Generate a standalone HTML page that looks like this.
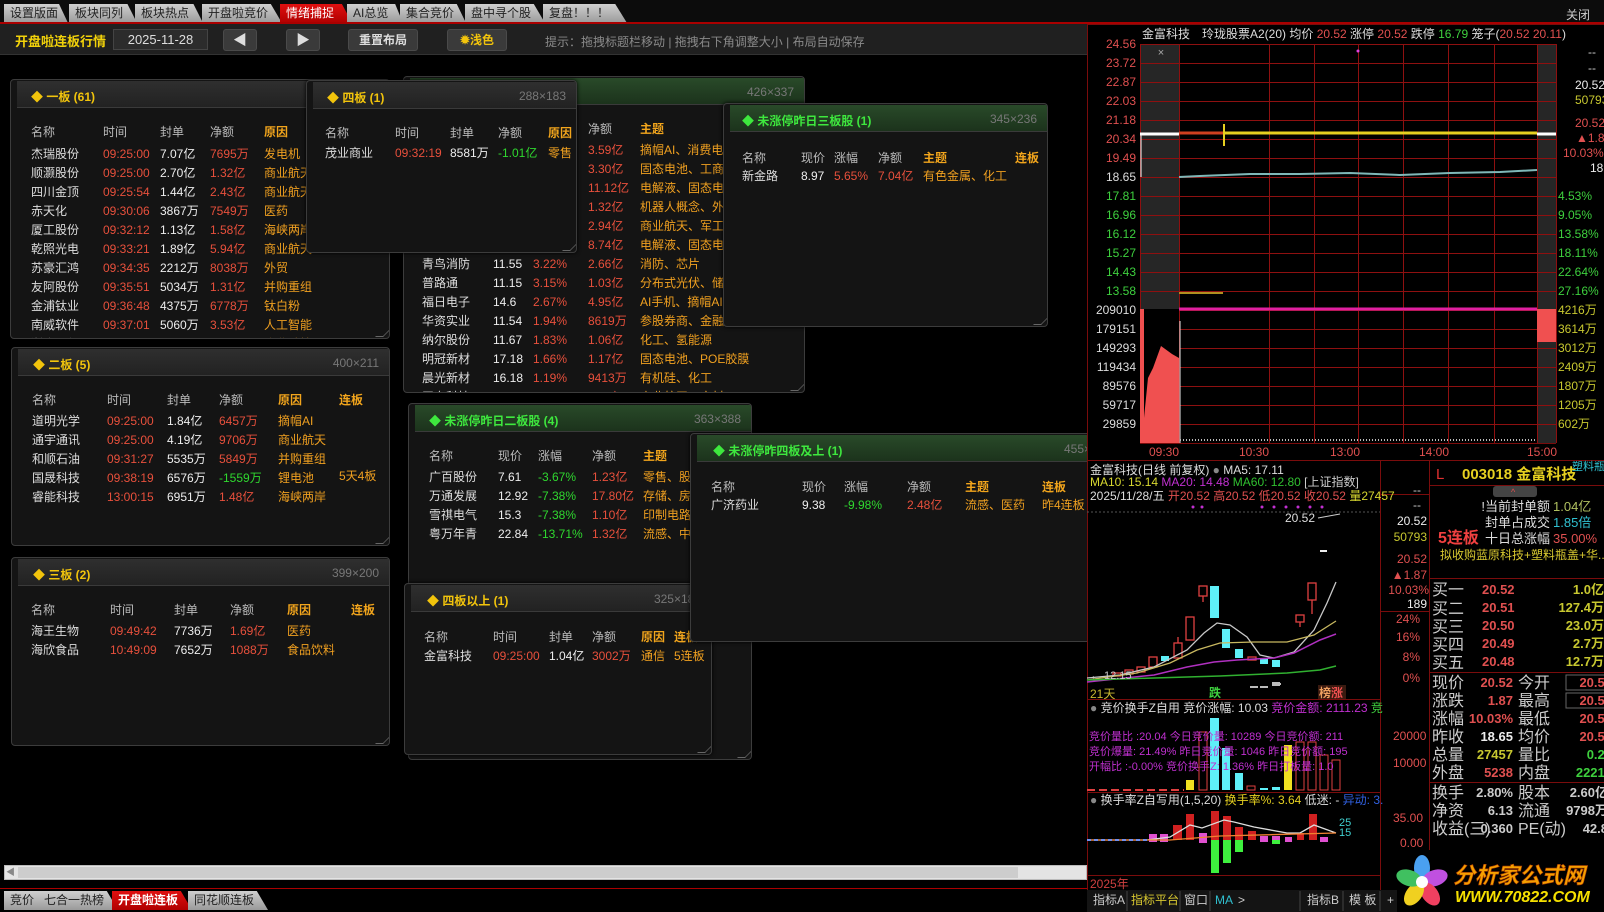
<!DOCTYPE html>
<html><head><meta charset="utf-8">
<style>
*{margin:0;padding:0;box-sizing:border-box}
body{width:1604px;height:912px;background:#000;overflow:hidden;position:relative;font-family:"Liberation Sans","Noto Sans CJK SC",sans-serif;font-size:12px;color:#ddd}
.a{position:absolute;white-space:nowrap}
.tab{position:absolute;top:4px;height:19px;background:linear-gradient(#cfcfcf,#9a9a9a);color:#222;font-size:12px;line-height:19px;padding-left:6px;clip-path:polygon(0 0,86% 0,100% 100%,0 100%)}
.tab.on{background:linear-gradient(#e01010,#b00000);color:#fff}
.btn{position:absolute;top:29px;height:22px;background:#3a3a3a;border:1px solid #4a4a4a;border-radius:3px;color:#ddd;text-align:center;line-height:20px;font-weight:bold}
.p{position:absolute;background:#141414;border:1px solid #3c3c3c;border-radius:4px;overflow:hidden;box-shadow:0 0 4px #000}
.h{position:absolute;left:6px;right:0;top:1px;height:27px;background:linear-gradient(#2f2f2f,#222);border-bottom:1px solid #3a3a3a}
.h.g{background:linear-gradient(#294a29,#1c331c)}
.tt{position:absolute;top:7px;font-weight:bold;color:#f2c40c;font-size:12px}
.h.g .tt{color:#3ee83e}
.sz{position:absolute;top:7px;right:10px;color:#777;font-size:12px}
.p .a{line-height:14px}
.hd{color:#bbb}.o{color:#f2a51c;font-weight:bold}.r{color:#e8503c}.w{color:#eee}.gr{color:#2fd82f}.y{color:#f0a020}
.rs{position:absolute;right:2px;bottom:1px;width:8px;height:8px;border-right:1px solid #666;border-bottom:1px solid #666;transform:skew(-45deg)}
</style></head><body>

<!-- top tabs -->
<div class="a" style="left:0;top:0;width:1604px;height:24px;background:#0c0c0c"></div>
<div class="tab" style="left:4px;width:64px">设置版面</div>
<div class="tab" style="left:69px;width:68px">板块同列</div>
<div class="tab" style="left:135px;width:68px">板块热点</div>
<div class="tab" style="left:202px;width:80px">开盘啦竞价</div>
<div class="tab on" style="left:280px;width:72px">情绪捕捉</div>
<div class="tab" style="left:347px;width:56px">AI总览</div>
<div class="tab" style="left:400px;width:66px">集合竞价</div>
<div class="tab" style="left:465px;width:80px">盘中寻个股</div>
<div class="tab" style="left:543px;width:84px">复盘！！！</div>
<div class="a" style="left:0;top:22px;width:1604px;height:2px;background:#a00"></div>
<div class="a" style="left:1566px;top:6px;color:#ccc">关闭</div>

<!-- toolbar -->
<div class="a" style="left:0;top:24px;width:1087px;height:31px;background:#202020;border-bottom:1px solid #333"></div>
<div class="a" style="left:15px;top:31px;color:#f2d20a;font-weight:bold;font-size:13px">开盘啦连板行情</div>
<div class="a" style="left:113px;top:29px;width:95px;height:21px;background:#2c2c2c;border:1px solid #444;color:#ddd;font-size:13px;text-align:center;line-height:19px">2025-11-28</div>
<div class="btn" style="left:223px;width:34px;font-size:14px">◀</div>
<div class="btn" style="left:286px;width:34px;font-size:14px">▶</div>
<div class="btn" style="left:348px;width:70px">重置布局</div>
<div class="btn" style="left:447px;width:60px;color:#f2c40c">✹浅色</div>
<div class="a" style="left:545px;top:33px;color:#8a8a8a">提示：拖拽标题栏移动 | 拖拽右下角调整大小 | 布局自动保存</div>

<!-- 一板 -->
<div class="p" style="left:10px;top:79px;width:380px;height:260px;z-index:1">
<div class="h"><div class="tt" style="left:14px">◆ 一板 (61)</div></div>
<div class="a hd" style="left:20px;top:45px">名称</div><div class="a hd" style="left:92px;top:45px">时间</div><div class="a hd" style="left:149px;top:45px">封单</div><div class="a hd" style="left:199px;top:45px">净额</div><div class="a o" style="left:253px;top:45px">原因</div>
<div class="a" style="left:20px;top:65px;line-height:19px">杰瑞股份<br>顺灏股份<br>四川金顶<br>赤天化<br>厦工股份<br>乾照光电<br>苏豪汇鸿<br>友阿股份<br>金浦钛业<br>南威软件<br>浙农股份</div>
<div class="a r" style="left:92px;top:65px;line-height:19px">09:25:00<br>09:25:00<br>09:25:54<br>09:30:06<br>09:32:12<br>09:33:21<br>09:34:35<br>09:35:51<br>09:36:48<br>09:37:01<br>09:37:46</div>
<div class="a w" style="left:149px;top:65px;line-height:19px">7.07亿<br>2.70亿<br>1.44亿<br>3867万<br>1.13亿<br>1.89亿<br>2212万<br>5034万<br>4375万<br>5060万<br>6701万</div>
<div class="a r" style="left:199px;top:65px;line-height:19px">7695万<br>1.32亿<br>2.43亿<br>7549万<br>1.58亿<br>5.94亿<br>8038万<br>1.31亿<br>6778万<br>3.53亿<br>3941万</div>
<div class="a y" style="left:253px;top:65px;line-height:19px">发电机<br>商业航天<br>商业航天<br>医药<br>海峡两岸<br>商业航天<br>外贸<br>并购重组<br>钛白粉<br>人工智能<br>农业种植</div>
<div class="rs"></div></div>

<!-- 426x337 -->
<div class="p" style="left:403px;top:76px;width:402px;height:317px;z-index:2">
<div class="h g"><div class="sz">426×337</div></div>
<div class="a hd" style="left:184px;top:45px">净额</div><div class="a o" style="left:236px;top:45px">主题</div>
<div class="a r" style="left:184px;top:64px;line-height:19px">3.59亿<br>3.30亿<br>11.12亿<br>1.32亿<br>2.94亿<br>8.74亿<br>2.66亿<br>1.03亿<br>4.95亿<br>8619万<br>1.06亿<br>1.17亿<br>9413万<br>1.75亿</div>
<div class="a y" style="left:236px;top:64px;line-height:19px">摘帽AI、消费电子<br>固态电池、工商业<br>电解液、固态电池<br>机器人概念、外贸<br>商业航天、军工<br>电解液、固态电池<br>消防、芯片<br>分布式光伏、储能<br>AI手机、摘帽AI<br>参股券商、金融<br>化工、氢能源<br>固态电池、POE胶膜<br>有机硅、化工<br>商业航天、宽材</div>
<div class="a" style="left:18px;top:178px;line-height:19px">青鸟消防<br>普路通<br>福日电子<br>华资实业<br>纳尔股份<br>明冠新材<br>晨光新材<br>天奈科技</div>
<div class="a w" style="left:89px;top:178px;line-height:19px">11.55<br>11.15<br>14.6<br>11.54<br>11.67<br>17.18<br>16.18<br>6.82</div>
<div class="a r" style="left:129px;top:178px;line-height:19px">3.22%<br>3.15%<br>2.67%<br>1.94%<br>1.83%<br>1.66%<br>1.19%<br>0.80%</div>
<div class="rs"></div></div>

<!-- 四板 -->
<div class="p" style="left:306px;top:80px;width:271px;height:173px;z-index:3">
<div class="h"><div class="tt" style="left:14px">◆ 四板 (1)</div><div class="sz">288×183</div></div>
<div class="a hd" style="left:18px;top:45px">名称</div><div class="a hd" style="left:88px;top:45px">时间</div><div class="a hd" style="left:143px;top:45px">封单</div><div class="a hd" style="left:191px;top:45px">净额</div><div class="a o" style="left:241px;top:45px">原因</div>
<div class="a" style="left:18px;top:65px">茂业商业</div><div class="a r" style="left:88px;top:65px">09:32:19</div><div class="a w" style="left:143px;top:65px">8581万</div><div class="a gr" style="left:191px;top:65px">-1.01亿</div><div class="a y" style="left:241px;top:65px">零售</div>
<div class="rs"></div></div>

<!-- 未涨停昨日三板股 -->
<div class="p" style="left:723px;top:103px;width:325px;height:224px;z-index:3">
<div class="h g"><div class="tt" style="left:12px">◆ 未涨停昨日三板股 (1)</div><div class="sz">345×236</div></div>
<div class="a hd" style="left:18px;top:47px">名称</div><div class="a hd" style="left:77px;top:47px">现价</div><div class="a hd" style="left:110px;top:47px">涨幅</div><div class="a hd" style="left:154px;top:47px">净额</div><div class="a o" style="left:199px;top:47px">主题</div><div class="a o" style="left:291px;top:47px">连板</div>
<div class="a" style="left:18px;top:65px">新金路</div><div class="a w" style="left:77px;top:65px">8.97</div><div class="a r" style="left:110px;top:65px">5.65%</div><div class="a r" style="left:154px;top:65px">7.04亿</div><div class="a y" style="left:199px;top:65px">有色金属、化工</div>
<div class="rs"></div></div>

<!-- 二板 -->
<div class="p" style="left:11px;top:347px;width:379px;height:199px;z-index:1">
<div class="h"><div class="tt" style="left:15px">◆ 二板 (5)</div><div class="sz">400×211</div></div>
<div class="a hd" style="left:20px;top:45px">名称</div><div class="a hd" style="left:95px;top:45px">时间</div><div class="a hd" style="left:155px;top:45px">封单</div><div class="a hd" style="left:207px;top:45px">净额</div><div class="a o" style="left:266px;top:45px">原因</div><div class="a o" style="left:327px;top:45px">连板</div>
<div class="a" style="left:20px;top:64px;line-height:19px">道明光学<br>通宇通讯<br>和顺石油<br>国晟科技<br>睿能科技</div>
<div class="a r" style="left:95px;top:64px;line-height:19px">09:25:00<br>09:25:00<br>09:31:27<br>09:38:19<br>13:00:15</div>
<div class="a w" style="left:155px;top:64px;line-height:19px">1.84亿<br>4.19亿<br>5535万<br>6576万<br>6951万</div>
<div class="a" style="left:207px;top:64px;line-height:19px"><span class="r">6457万</span><br><span class="r">9706万</span><br><span class="r">5849万</span><br><span class="gr">-1559万</span><br><span class="r">1.48亿</span></div>
<div class="a y" style="left:266px;top:64px;line-height:19px">摘帽AI<br>商业航天<br>并购重组<br>锂电池<br>海峡两岸</div>
<div class="a y" style="left:327px;top:121px">5天4板</div>
<div class="rs"></div></div>

<!-- 三板 -->
<div class="p" style="left:11px;top:557px;width:379px;height:189px;z-index:1">
<div class="h"><div class="tt" style="left:15px">◆ 三板 (2)</div><div class="sz">399×200</div></div>
<div class="a hd" style="left:19px;top:45px">名称</div><div class="a hd" style="left:98px;top:45px">时间</div><div class="a hd" style="left:162px;top:45px">封单</div><div class="a hd" style="left:218px;top:45px">净额</div><div class="a o" style="left:275px;top:45px">原因</div><div class="a o" style="left:339px;top:45px">连板</div>
<div class="a" style="left:19px;top:64px;line-height:19px">海王生物<br>海欣食品</div>
<div class="a r" style="left:98px;top:64px;line-height:19px">09:49:42<br>10:49:09</div>
<div class="a w" style="left:162px;top:64px;line-height:19px">7736万<br>7652万</div>
<div class="a r" style="left:218px;top:64px;line-height:19px">1.69亿<br>1088万</div>
<div class="a y" style="left:275px;top:64px;line-height:19px">医药<br>食品饮料</div>
<div class="rs"></div></div>

<!-- 未涨停昨日二板股 -->
<div class="p" style="left:408px;top:403px;width:344px;height:357px;z-index:2">
<div class="h g"><div class="tt" style="left:14px">◆ 未涨停昨日二板股 (4)</div><div class="sz">363×388</div></div>
<div class="a hd" style="left:20px;top:45px">名称</div><div class="a hd" style="left:89px;top:45px">现价</div><div class="a hd" style="left:129px;top:45px">涨幅</div><div class="a hd" style="left:183px;top:45px">净额</div><div class="a o" style="left:234px;top:45px">主题</div>
<div class="a" style="left:20px;top:64px;line-height:19px">广百股份<br>万通发展<br>雪祺电气<br>粤万年青</div>
<div class="a w" style="left:89px;top:64px;line-height:19px">7.61<br>12.92<br>15.3<br>22.84</div>
<div class="a gr" style="left:129px;top:64px;line-height:19px">-3.67%<br>-7.38%<br>-7.38%<br>-13.71%</div>
<div class="a r" style="left:183px;top:64px;line-height:19px">1.23亿<br>17.80亿<br>1.10亿<br>1.32亿</div>
<div class="a y" style="left:234px;top:64px;line-height:19px">零售、股权转让<br>存储、房地产<br>印制电路板<br>流感、中药</div>
<div class="rs"></div></div>

<!-- 四板以上 -->
<div class="p" style="left:404px;top:583px;width:308px;height:172px;z-index:3">
<div class="h"><div class="tt" style="left:16px">◆ 四板以上 (1)</div><div class="sz">325×183</div></div>
<div class="a hd" style="left:19px;top:46px">名称</div><div class="a hd" style="left:88px;top:46px">时间</div><div class="a hd" style="left:144px;top:46px">封单</div><div class="a hd" style="left:187px;top:46px">净额</div><div class="a o" style="left:236px;top:46px">原因</div><div class="a o" style="left:269px;top:46px">连板</div>
<div class="a" style="left:19px;top:65px">金富科技</div><div class="a r" style="left:88px;top:65px">09:25:00</div><div class="a w" style="left:144px;top:65px">1.04亿</div><div class="a r" style="left:187px;top:65px">3002万</div><div class="a y" style="left:236px;top:65px">通信</div><div class="a y" style="left:269px;top:65px">5连板</div>
<div class="rs"></div></div>

<!-- 未涨停昨四板及上 -->
<div class="p" style="left:690px;top:433px;width:420px;height:209px;z-index:4">
<div class="h g"><div class="tt" style="left:16px">◆ 未涨停昨四板及上 (1)</div><div class="sz" style="right:auto;left:367px">455×220</div></div>
<div class="a hd" style="left:20px;top:46px">名称</div><div class="a hd" style="left:111px;top:46px">现价</div><div class="a hd" style="left:153px;top:46px">涨幅</div><div class="a hd" style="left:216px;top:46px">净额</div><div class="a o" style="left:274px;top:46px">主题</div><div class="a o" style="left:351px;top:46px">连板</div>
<div class="a" style="left:20px;top:64px">广济药业</div><div class="a w" style="left:111px;top:64px">9.38</div><div class="a gr" style="left:153px;top:64px">-9.98%</div><div class="a r" style="left:216px;top:64px">2.48亿</div><div class="a y" style="left:274px;top:64px">流感、医药</div><div class="a y" style="left:351px;top:64px">昨4连板</div>
</div>

<!-- scrollbar & bottom tabs -->
<div class="a" style="left:4px;top:865px;width:1083px;height:15px;background:#e4e4e4;border:1px solid #bbb"></div>
<div class="a" style="left:18px;top:867px;width:1000px;height:11px;background:#cdcdcd"></div>
<div class="a" style="left:6px;top:865px;color:#888;font-size:9px;line-height:15px">◀</div>
<div class="a" style="left:0;top:888px;width:1087px;height:1px;background:#a00"></div>
<div class="tab" style="top:891px;left:4px;width:40px;height:19px">竞价</div>
<div class="tab" style="top:891px;left:38px;width:80px;height:19px">七合一热榜</div>
<div class="tab on" style="top:891px;left:112px;width:80px;height:19px;font-weight:bold">开盘啦连板</div>
<div class="tab" style="top:891px;left:188px;width:80px;height:19px">同花顺连板</div>

<!-- right side chart -->
<svg class="a" style="left:0;top:0;z-index:10" width="1604" height="912" viewBox="0 0 1604 912" font-family="Liberation Sans,Noto Sans CJK SC,sans-serif" font-size="12">
<rect x="1087" y="24" width="517" height="866" fill="#000"/>
<g stroke="#7a0c0c" stroke-width="1">
<line x1="1087" y1="24.5" x2="1604" y2="24.5"/>
<line x1="1087.5" y1="24" x2="1087.5" y2="890"/>
<line x1="1087" y1="460.5" x2="1604" y2="460.5"/>
<line x1="1140" y1="443.5" x2="1556" y2="443.5"/>
</g>
<rect x="1140" y="44" width="39" height="399" fill="#262626"/>
<rect x="1537" y="44" width="19" height="399" fill="#262626"/>
<g stroke="#8e1010" stroke-width="1">
<path d="M1140 44.5H1556M1140 63.5H1556M1140 82.5H1556M1140 101.5H1556M1140 120.5H1556M1140 139.5H1556M1140 158.5H1556M1140 177.5H1556M1140 196.5H1556M1140 215.5H1556M1140 234.5H1556M1140 253.5H1556M1140 272.5H1556M1140 291.5H1556M1140 310.5H1556M1140 329.5H1556M1140 348.5H1556M1140 367.5H1556M1140 386.5H1556M1140 405.5H1556M1140 424.5H1556"/>
<path d="M1140.5 44V443M1179.5 44V443M1269.5 44V443M1314.5 44V443M1358.5 44V443M1403.5 44V443M1448.5 44V443M1494.5 44V443M1537.5 44V443M1556.5 44V443"/>
</g>
<text x="1142" y="38" fill="#ddd">金富科技　玲珑股票A2(20)  均价 <tspan fill="#e05050">20.52</tspan> 涨停 <tspan fill="#e05050">20.52</tspan> 跌停 <tspan fill="#3ed03e">16.79</tspan> 笼子(<tspan fill="#e05050">20.52  20.11</tspan>)</text>
<text x="1161" y="56" fill="#aaa" font-size="11" text-anchor="middle">×</text>
<g text-anchor="end" font-size="12">
<text x="1136" y="48" fill="#e05050">24.56</text><text x="1136" y="67" fill="#e05050">23.72</text><text x="1136" y="86" fill="#e05050">22.87</text><text x="1136" y="105" fill="#e05050">22.03</text><text x="1136" y="124" fill="#e05050">21.18</text><text x="1136" y="143" fill="#e05050">20.34</text><text x="1136" y="162" fill="#e05050">19.49</text><text x="1136" y="181" fill="#ddd">18.65</text>
<text x="1136" y="200" fill="#3ed03e">17.81</text><text x="1136" y="219" fill="#3ed03e">16.96</text><text x="1136" y="238" fill="#3ed03e">16.12</text><text x="1136" y="257" fill="#3ed03e">15.27</text><text x="1136" y="276" fill="#3ed03e">14.43</text><text x="1136" y="295" fill="#3ed03e">13.58</text>
<text x="1136" y="314" fill="#ddd">209010</text><text x="1136" y="333" fill="#ddd">179151</text><text x="1136" y="352" fill="#ddd">149293</text><text x="1136" y="371" fill="#ddd">119434</text><text x="1136" y="390" fill="#ddd">89576</text><text x="1136" y="409" fill="#ddd">59717</text><text x="1136" y="428" fill="#ddd">29859</text>
</g>
<g font-size="12">
<text x="1588" y="56" fill="#ccc">--</text><text x="1588" y="72" fill="#ccc">--</text>
<text x="1575" y="89" fill="#eee">20.52</text><text x="1575" y="104" fill="#c8c830">50793</text><text x="1575" y="127" fill="#e05050">20.52</text><text x="1576" y="142" fill="#e05050">▲1.87</text><text x="1563" y="157" fill="#e05050">10.03%</text><text x="1590" y="172" fill="#eee">189</text>
<text x="1558" y="200" fill="#3ed03e">4.53%</text><text x="1558" y="219" fill="#3ed03e">9.05%</text><text x="1558" y="238" fill="#3ed03e">13.58%</text><text x="1558" y="257" fill="#3ed03e">18.11%</text><text x="1558" y="276" fill="#3ed03e">22.64%</text><text x="1558" y="295" fill="#3ed03e">27.16%</text>
<text x="1558" y="314" fill="#c8c830">4216万</text><text x="1558" y="333" fill="#c8c830">3614万</text><text x="1558" y="352" fill="#c8c830">3012万</text><text x="1558" y="371" fill="#c8c830">2409万</text><text x="1558" y="390" fill="#c8c830">1807万</text><text x="1558" y="409" fill="#c8c830">1205万</text><text x="1558" y="428" fill="#c8c830">602万</text>
</g>
<line x1="1140" y1="134" x2="1179" y2="134" stroke="#fff" stroke-width="3"/>
<line x1="1537" y1="134" x2="1556" y2="134" stroke="#fff" stroke-width="3"/>
<line x1="1179" y1="133" x2="1224" y2="133" stroke="#d04020" stroke-width="3"/>
<line x1="1224" y1="133" x2="1537" y2="133" stroke="#e6d020" stroke-width="3"/>
<line x1="1224" y1="124" x2="1224" y2="146" stroke="#e6d020" stroke-width="2"/>
<line x1="1141" y1="134" x2="1141" y2="177" stroke="#fff" stroke-width="1"/>
<polyline points="1179,177 1200,176 1250,174 1300,174 1350,173 1400,175 1450,173 1500,172 1537,170" fill="none" stroke="#7fb8b8" stroke-width="2"/>
<circle cx="1358" cy="51" r="1.5" fill="#e040e0"/>
<line x1="1179" y1="293" x2="1223" y2="293" stroke="#b09020" stroke-width="2"/>
<line x1="1179" y1="309" x2="1537" y2="309" stroke="#e020a0" stroke-width="3"/>
<rect x="1140" y="309" width="39" height="134" fill="#f05050"/>
<polygon points="1144,309 1179,309 1179,358 1172,354 1161,346 1153,368 1148,378 1144,418" fill="#000"/>
<rect x="1537" y="309" width="19" height="33" fill="#f05050"/>
<line x1="1180" y1="321" x2="1180" y2="443" stroke="#eee" stroke-width="1"/>
<line x1="1180" y1="440" x2="1537" y2="440" stroke="#bbb" stroke-width="2" stroke-dasharray="1 2"/>
<g fill="#e05050" font-size="12">
<text x="1149" y="456">09:30</text><text x="1239" y="456">10:30</text><text x="1330" y="456">13:00</text><text x="1419" y="456">14:00</text><text x="1527" y="456">15:00</text>
</g>
<!-- lower frame -->
<g stroke="#7a0c0c">
<path d="M1380.5 460V890M1429.5 460V890M1087 699.5H1380M1087 792.5H1380M1087 875.5H1380M1429 485.5H1604M1429 578.5H1604M1429 672.5H1604M1429 782.5H1604M1380 494.5H1429M1380 611.5H1429"/>
</g>
<text x="1090" y="474" fill="#ddd">金富科技(日线 前复权) <tspan fill="#888">●</tspan> MA5: 17.11</text>
<text x="1090" y="486" fill="#d8d830">MA10: 15.14 <tspan fill="#c030d0">MA20: 14.48</tspan> <tspan fill="#30c030">MA60: 12.80</tspan> <tspan fill="#ccc">[上证指数]</tspan></text>
<text x="1090" y="500" fill="#ddd">2025/11/28/五 <tspan fill="#e05050">开20.52 高20.52 低20.52 收20.52</tspan> <tspan fill="#d8d830">量27457</tspan></text>
<g fill="#c030d0"><circle cx="1193" cy="507" r="1.5"/><circle cx="1202" cy="507" r="1.5"/><circle cx="1262" cy="507" r="1.5"/><circle cx="1274" cy="507" r="1.5"/><circle cx="1286" cy="507" r="1.5"/><circle cx="1298" cy="507" r="1.5"/><circle cx="1310" cy="507" r="1.5"/><circle cx="1322" cy="507" r="1.5"/></g>
<line x1="1087" y1="512" x2="1380" y2="512" stroke="#555" stroke-dasharray="2 2"/>
<text x="1285" y="522" fill="#ddd">20.52</text><path d="M1318 518L1340 514" stroke="#ccc"/>
<line x1="1320" y1="551" x2="1327" y2="551" stroke="#eee" stroke-width="2"/>
<g fill="none" stroke="#e04040" stroke-width="1.3">
<rect x="1199" y="586" width="8" height="10"/><line x1="1203" y1="596" x2="1203" y2="602"/>
<rect x="1186" y="617" width="8" height="23"/>
<rect x="1174" y="643" width="8" height="15"/><line x1="1178" y1="637" x2="1178" y2="643"/>
<rect x="1149" y="657" width="8" height="10"/>
<rect x="1137" y="667" width="8" height="5"/><rect x="1125" y="670" width="8" height="4"/><rect x="1113" y="673" width="8" height="3"/>
<rect x="1248" y="657" width="8" height="3"/>
<rect x="1296" y="615" width="8" height="7"/><line x1="1300" y1="622" x2="1300" y2="627"/>
<rect x="1308" y="583" width="8" height="17"/><line x1="1312" y1="600" x2="1312" y2="614"/>
</g>
<g fill="#5ef0f8">
<rect x="1210" y="586" width="9" height="32"/><rect x="1161" y="656" width="8" height="5"/><rect x="1222" y="629" width="8" height="19"/><rect x="1235" y="649" width="8" height="9"/><rect x="1260" y="658" width="8" height="6"/><rect x="1272" y="660" width="8" height="7"/>
</g>
<polyline points="1087,678 1120,675 1154,667 1187,650 1204,633 1217,623 1230,625 1247,637 1260,655 1274,658 1294,652 1314,630 1327,603 1336,582" fill="none" stroke="#c8c8c8" stroke-width="1.3"/>
<polyline points="1087,680 1137,673 1170,663 1197,650 1220,643 1254,642 1287,642 1314,635 1336,621" fill="none" stroke="#c8b860" stroke-width="1.3"/>
<polyline points="1087,682 1154,675 1187,667 1214,662 1237,660 1274,658 1294,653 1320,640 1336,634" fill="none" stroke="#b030c0" stroke-width="1.5"/>
<polyline points="1087,680 1154,678 1220,676 1287,673 1320,670 1336,666" fill="none" stroke="#30b030" stroke-width="1.5"/>
<g fill="#bbb"><rect x="1260" y="686" width="8" height="2"/><rect x="1273" y="683" width="8" height="2"/><rect x="1250" y="686" width="8" height="2"/><rect x="1272" y="682" width="8" height="4"/></g>
<text x="1090" y="698" fill="#c8b830" font-size="12">21天</text>
<text x="1090" y="679" fill="#ccc" font-size="11">← 12.15</text>
<text x="1209" y="697" fill="#3ed03e" font-weight="bold">跌</text>
<rect x="1318" y="685" width="28" height="14" fill="#3a1a10"/><text x="1319" y="697" fill="#f0a060" font-weight="bold">榜<tspan fill="#f05050">涨</tspan></text>
<!-- ind1 -->
<text x="1090" y="712" fill="#ddd"><tspan fill="#888">●</tspan> 竞价换手Z自用  竞价涨幅: 10.03 <tspan fill="#c030d0">竞价金额: 2111.23</tspan> <tspan fill="#3ed03e">竞</tspan></text>
<rect x="1210" y="718" width="9" height="72" fill="#5ef0f8"/>
<rect x="1186" y="780" width="8" height="10" fill="#f0e020"/>
<rect x="1199" y="732" width="8" height="58" fill="none" stroke="#e04040"/>
<rect x="1222" y="748" width="8" height="42" fill="#5ef0f8"/>
<rect x="1235" y="773" width="8" height="17" fill="#5ef0f8"/>
<rect x="1247" y="786" width="8" height="4" fill="none" stroke="#e04040"/>
<rect x="1260" y="788" width="8" height="2" fill="#5ef0f8"/><rect x="1272" y="787" width="8" height="3" fill="#5ef0f8"/>
<rect x="1284" y="745" width="8" height="45" fill="#f0e020"/>
<g fill="none" stroke="#e04040"><rect x="1296" y="742" width="8" height="48"/><rect x="1308" y="742" width="8" height="48"/><rect x="1320" y="755" width="8" height="35"/><rect x="1332" y="760" width="8" height="30"/></g>
<line x1="1087" y1="790" x2="1184" y2="790" stroke="#e04040" stroke-width="2" stroke-dasharray="8 4"/>
<g fill="#c030d0" font-size="11">
<text x="1089" y="740">竞价量比 :20.04      今日竞价量: 10289 今日竞价额: 211</text>
<text x="1089" y="755">竞价爆量: 21.49%  昨日竞价量: 1046 昨日竞价额: 195</text>
<text x="1089" y="770">开幅比   :-0.00%      竞价换手Z: 1.36% 昨日打板量: 1.0</text>
</g>
<text x="1393" y="740" fill="#e05050" font-size="12">20000</text><text x="1393" y="767" fill="#e05050" font-size="12">10000</text>
<!-- ind2 -->
<text x="1090" y="804" fill="#ddd"><tspan fill="#888">●</tspan> 换手率Z自写用(1,5,20) <tspan fill="#e6d020">换手率%: 3.64</tspan> 低迷: - <tspan fill="#3060e0">异动: 3.</tspan></text>
<g fill="#d02020"><rect x="1173" y="825" width="9" height="15"/><rect x="1186" y="814" width="8" height="26"/><rect x="1211" y="811" width="8" height="29"/><rect x="1223" y="816" width="8" height="24"/><rect x="1235" y="827" width="8" height="13"/><rect x="1248" y="831" width="8" height="9"/><rect x="1297" y="833" width="7" height="7"/><rect x="1309" y="814" width="8" height="26"/></g>
<g fill="#e050d0"><rect x="1149" y="834" width="8" height="8"/><rect x="1160" y="834" width="8" height="8"/><rect x="1199" y="833" width="8" height="10"/><rect x="1260" y="836" width="8" height="6"/><rect x="1272" y="836" width="8" height="6"/><rect x="1285" y="837" width="7" height="5"/><rect x="1320" y="837" width="8" height="5"/></g>
<g fill="#3ef03e"><rect x="1211" y="840" width="8" height="33"/><rect x="1223" y="840" width="8" height="23"/><rect x="1235" y="840" width="8" height="12"/><rect x="1272" y="840" width="8" height="4"/></g>
<polyline points="1087,840 1147,840 1170,837 1190,825 1202,828 1224,820 1234,822 1254,827 1287,833 1300,833 1314,825 1336,833" fill="none" stroke="#ddd" stroke-width="1.3"/>
<polyline points="1087,840 1170,840 1220,836 1336,833" fill="none" stroke="#f08030" stroke-width="1.3"/>
<line x1="1087" y1="840" x2="1150" y2="840" stroke="#7090f0" stroke-width="2" stroke-dasharray="4 3"/>
<text x="1339" y="826" fill="#40d0d0" font-size="11">25</text><text x="1339" y="836" fill="#40d0d0" font-size="11">15</text>
<text x="1393" y="822" fill="#e05050">35.00</text><text x="1400" y="847" fill="#e05050">0.00</text>
<text x="1090" y="888" fill="#d04040">2025年</text>
<!-- K axis -->
<g font-size="12">
<text x="1413" y="494" fill="#ccc">--</text><text x="1413" y="509" fill="#ccc">--</text>
<text x="1427" y="525" fill="#eee" text-anchor="end">20.52</text><text x="1427" y="541" fill="#c8c830" text-anchor="end">50793</text><text x="1427" y="563" fill="#e05050" text-anchor="end">20.52</text><text x="1427" y="579" fill="#e05050" text-anchor="end">▲1.87</text><text x="1429" y="594" fill="#e05050" text-anchor="end">10.03%</text><text x="1427" y="608" fill="#eee" text-anchor="end">189</text>
<text x="1420" y="623" fill="#e05050" text-anchor="end">24%</text><text x="1420" y="641" fill="#e05050" text-anchor="end">16%</text><text x="1420" y="661" fill="#e05050" text-anchor="end">8%</text><text x="1420" y="682" fill="#e05050" text-anchor="end">0%</text>
</g>
<!-- info panel -->
<text x="1436" y="479" fill="#e03030" font-size="15">L</text>
<text x="1462" y="479" fill="#e6d020" font-size="15" font-weight="bold">003018 金富科技</text><text x="1572" y="470" fill="#30c0d0" font-size="11">塑料瓶</text>
<rect x="1493" y="486" width="44" height="11" rx="3" fill="#444"/><text x="1511" y="495" fill="#e05050" font-size="9">^</text>
<g font-size="13" text-anchor="end">
<text x="1550" y="511" fill="#ddd">!当前封单额</text><text x="1550" y="527" fill="#ddd">封单占成交</text><text x="1550" y="543" fill="#ddd">十日总涨幅</text>
</g>
<text x="1553" y="511" fill="#b0c060" font-size="13">1.04亿</text><text x="1553" y="527" fill="#30c0d0" font-size="13">1.85倍</text><text x="1553" y="543" fill="#e05050" font-size="13">35.00%</text>
<text x="1438" y="543" fill="#f04040" font-size="16" font-weight="bold">5连板</text>
<text x="1440" y="559" fill="#d8c830" font-size="12">拟收购蓝原科技+塑料瓶盖+华..</text>
<g font-size="16" fill="#ccc">
<text x="1432" y="595">买一</text><text x="1432" y="614">买二</text><text x="1432" y="632">买三</text><text x="1432" y="650">买四</text><text x="1432" y="668">买五</text>
<text x="1432" y="688">现价</text><text x="1432" y="706">涨跌</text><text x="1432" y="724">涨幅</text><text x="1432" y="742">昨收</text><text x="1432" y="760">总量</text><text x="1432" y="778">外盘</text>
<text x="1518" y="688">今开</text><text x="1518" y="706">最高</text><text x="1518" y="724">最低</text><text x="1518" y="742">均价</text><text x="1518" y="760">量比</text><text x="1518" y="778">内盘</text>
<text x="1432" y="798">换手</text><text x="1432" y="816">净资</text><text x="1432" y="834">收益(三)</text><text x="1518" y="798">股本</text><text x="1518" y="816">流通</text><text x="1518" y="834">PE(动)</text>
</g>
<g font-size="13" font-weight="bold">
<text x="1482" y="594" fill="#e05050">20.52</text><text x="1482" y="612" fill="#e05050">20.51</text><text x="1482" y="630" fill="#e05050">20.50</text><text x="1482" y="648" fill="#e05050">20.49</text><text x="1482" y="666" fill="#e05050">20.48</text>
<g text-anchor="end" fill="#c8c830"><text x="1604" y="594">1.0亿</text><text x="1604" y="612">127.4万</text><text x="1604" y="630">23.0万</text><text x="1604" y="648">2.7万</text><text x="1604" y="666">12.7万</text></g>
<g text-anchor="end">
<text x="1513" y="687" fill="#e05050">20.52</text><text x="1513" y="705" fill="#e05050">1.87</text><text x="1513" y="723" fill="#e05050">10.03%</text><text x="1513" y="741" fill="#eee">18.65</text><text x="1513" y="759" fill="#c8c830">27457</text><text x="1513" y="777" fill="#e05050">5238</text>
<text x="1612" y="687" fill="#e05050">20.52</text><text x="1612" y="705" fill="#e05050">20.52</text><text x="1612" y="723" fill="#e05050">20.52</text><text x="1612" y="741" fill="#e05050">20.52</text><text x="1612" y="759" fill="#3ed03e">0.22</text><text x="1612" y="777" fill="#3ed03e">22219</text>
<text x="1513" y="797" fill="#ccc">2.80%</text><text x="1513" y="815" fill="#ccc">6.13</text><text x="1513" y="833" fill="#ccc">0.360</text>
<text x="1608" y="797" fill="#ccc">2.60亿</text><text x="1608" y="815" fill="#ccc">9798万</text><text x="1608" y="833" fill="#ccc">42.8</text>
</g></g>
<rect x="1566" y="675" width="40" height="15" fill="none" stroke="#666"/><rect x="1566" y="693" width="40" height="15" fill="none" stroke="#666"/>
<!-- bottom tab bar -->
<rect x="1087" y="890" width="310" height="22" fill="#141414"/>
<g font-size="12">
<text x="1093" y="904" fill="#ccc">指标A</text><text x="1131" y="904" fill="#d8c830">指标平台</text><text x="1184" y="904" fill="#ccc">窗口</text><text x="1215" y="904" fill="#30c0d0">MA</text><text x="1238" y="904" fill="#ccc">&gt;</text><text x="1307" y="904" fill="#ccc">指标B</text><text x="1349" y="904" fill="#ccc">模 板</text><text x="1387" y="904" fill="#ccc">+</text>
</g>
<g stroke="#444"><path d="M1127 891V911M1180 891V911M1210 891V911M1300 891V911M1343 891V911M1380 891V911"/></g>
<!-- logo -->
<rect x="1397" y="850" width="207" height="62" fill="#000"/>
<g transform="translate(1422,882)">
<ellipse cx="0" cy="-14" rx="8" ry="13" fill="#4aa0f0"/>
<ellipse cx="13" cy="-4" rx="8" ry="13" fill="#c050e0" transform="rotate(72 13 -4)"/>
<ellipse cx="8" cy="12" rx="8" ry="13" fill="#f04060" transform="rotate(144 8 12)"/>
<ellipse cx="-8" cy="12" rx="8" ry="13" fill="#f0d020" transform="rotate(-144 -8 12)"/>
<ellipse cx="-13" cy="-4" rx="8" ry="13" fill="#40c060" transform="rotate(-72 -13 -4)"/>
<circle r="6" fill="#fff"/>
</g>
<text x="1453" y="883" fill="#f5a000" stroke="#b04000" stroke-width="0.6" font-size="22" font-weight="bold" font-style="italic">分析家公式网</text>
<text x="1455" y="902" fill="#f5e000" font-size="16" font-weight="bold" font-style="italic">WWW.70822.COM</text>
</svg>
</body></html>
